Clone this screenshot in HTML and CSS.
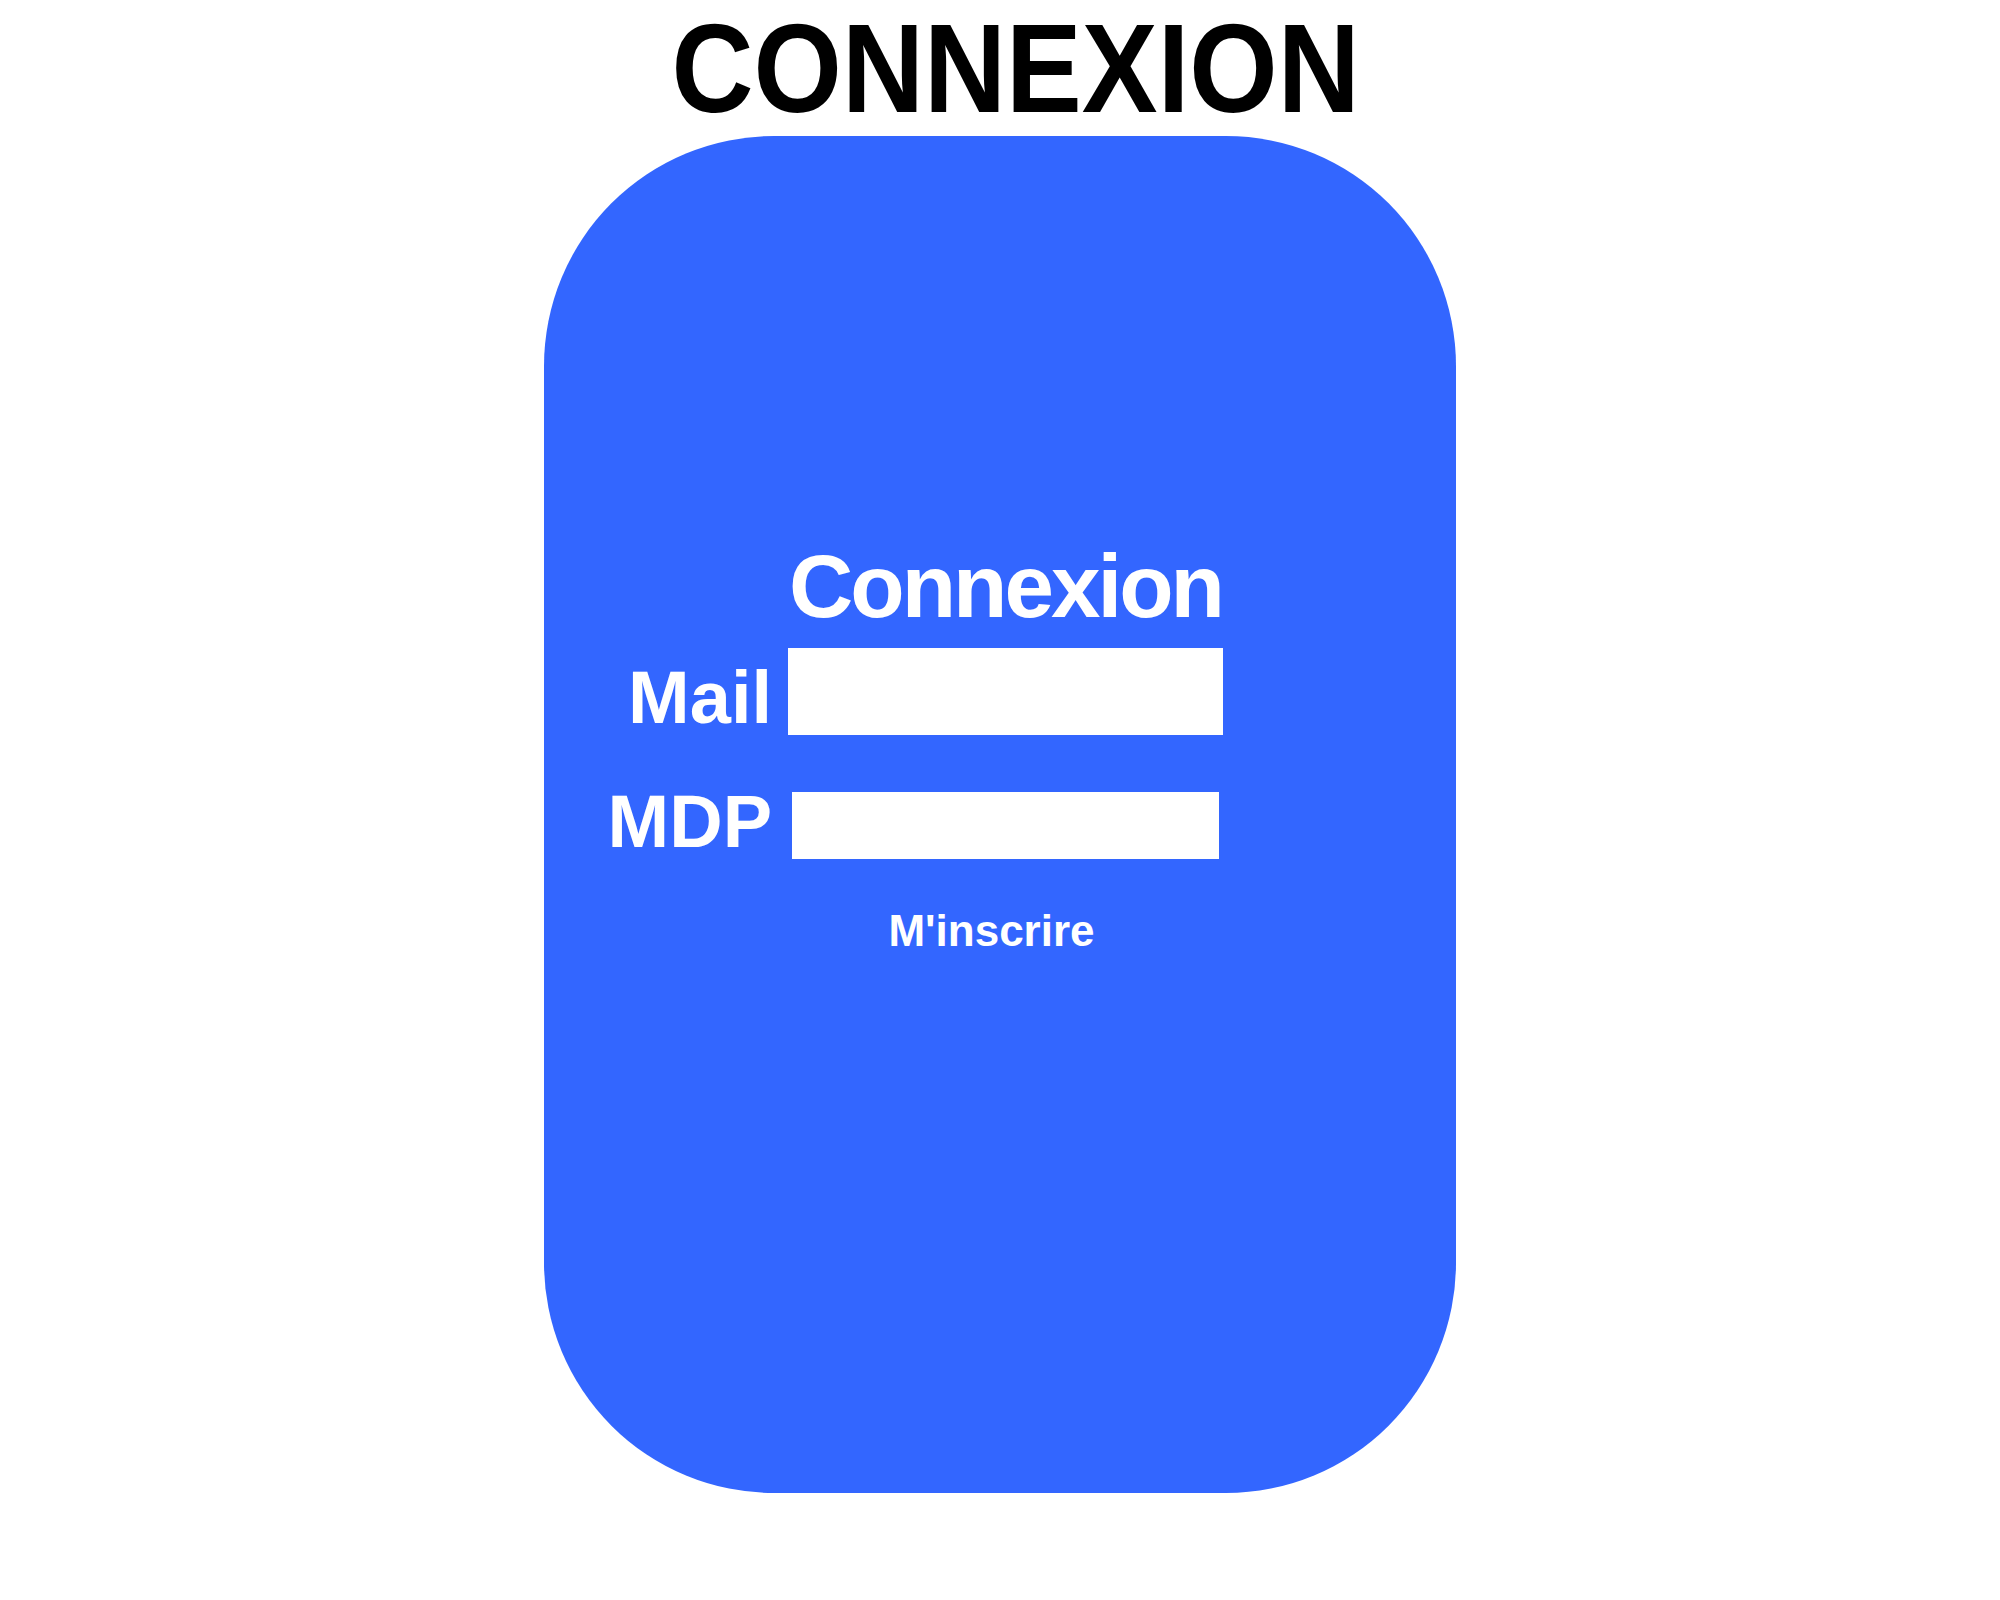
FILE: index.html
```html
<!DOCTYPE html>
<html lang="fr">
<head>
<meta charset="utf-8">
<title>Connexion</title>
<link rel="stylesheet" href="styles.css">
</head>
<body>
<h1 class="title"><span class="title-text">CONNEXION</span></h1>
<div class="card">
  <form class="form">
    <h2 class="form-title">Connexion</h2>
    <label class="label" for="mail">Mail</label>
    <input class="field field-mail" id="mail" type="text">
    <label class="label" for="mdp">MDP</label>
    <input class="field field-mdp" id="mdp" type="password">
    <a class="signup">M'inscrire</a>
  </form>
</div>
</body>
</html>
```

FILE: styles.css
```css
html, body {
  margin: 0;
  padding: 0;
  background: #ffffff;
}

body {
  font-family: "Liberation Sans", Arial, sans-serif;
  font-weight: bold;
}

.title {
  margin: 0;
  padding: 5px 0 0 31px;
  font-size: 127px;
  line-height: 127px;
  text-align: center;
  color: #000000;
}

.title-text {
  display: inline-block;
  transform: scaleX(0.895);
}

.card {
  box-sizing: border-box;
  width: 912px;
  height: 1357px;
  margin: 4px auto 0;
  padding-top: 406px;
  background: #3366ff;
  border-radius: 230px;
  color: #ffffff;
}

.form {
  display: grid;
  grid-template-columns: 200px 435px;
  column-gap: 16px;
  align-items: end;
  margin-left: 28px;
}

.form-title {
  grid-column: 2;
  margin: 0 0 17px;
  font-size: 89px;
  line-height: 89px;
  letter-spacing: -3px;
  text-align: center;
}

.label {
  grid-column: 1;
  font-size: 74px;
  line-height: 74px;
  text-align: right;
}

.field {
  grid-column: 2;
  box-sizing: border-box;
  border: none;
  padding: 0;
  margin: 0;
  background: #ffffff;
  justify-self: center;
}

.field-mail {
  width: 435px;
  height: 87px;
}

.field-mdp {
  width: 427px;
  height: 67px;
  margin-top: 57px;
}

.signup {
  grid-column: 2;
  justify-self: center;
  margin: 50px 28px 0 0;
  font-size: 44px;
  line-height: 44px;
  color: #ffffff;
  cursor: pointer;
}
```
